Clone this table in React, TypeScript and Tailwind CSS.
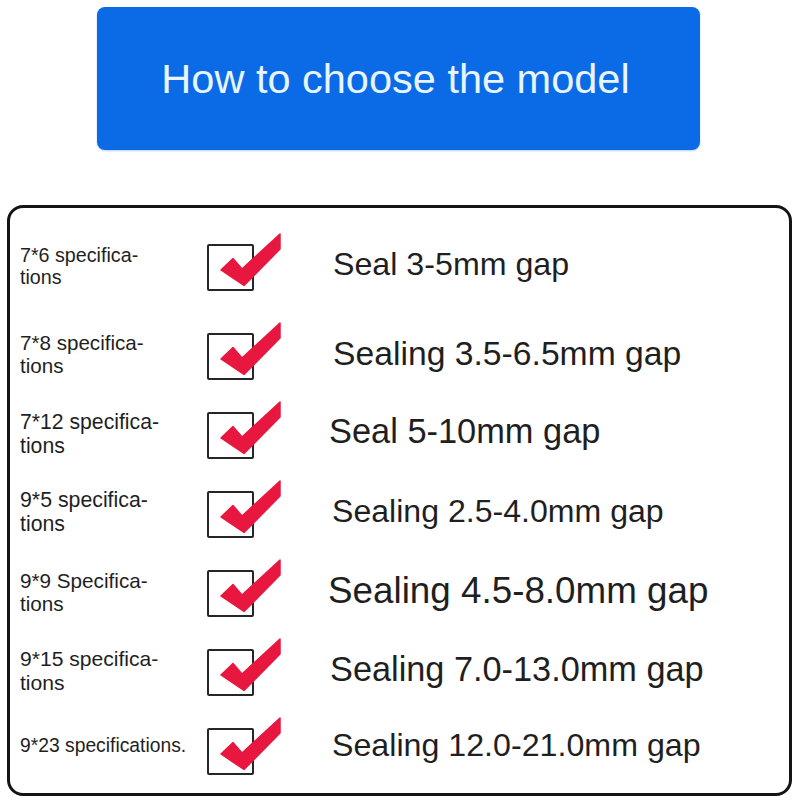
const rows = [
  {
    spec: ['7*6 specifica-', 'tions'],
    specSize: 'text-[19.7px]',
    gap: 'Seal 3-5mm gap',
    gapClass: 'ml-[79px] mb-[7px] text-[32.2px]',
    specShift: 'mb-[3px]',
    first: true,
  },
  {
    spec: ['7*8 specifica-', 'tions'],
    specSize: 'text-[20.6px]',
    gap: 'Sealing 3.5-6.5mm gap',
    gapClass: 'ml-[79px] mb-[6px] text-[33.7px]',
    specShift: 'mb-[5px]',
  },
  {
    spec: ['7*12 specifica-', 'tions'],
    specSize: 'text-[21.2px]',
    gap: 'Seal 5-10mm gap',
    gapClass: 'ml-[75px] mb-[8px] text-[34.4px]',
    specShift: 'mb-[3px]',
  },
  {
    spec: ['9*5 specifica-', 'tions'],
    specSize: 'text-[21.3px]',
    gap: 'Sealing 2.5-4.0mm gap',
    gapClass: 'ml-[78px] mb-[7px] text-[32.1px]',
    specShift: 'mb-[3px]',
  },
  {
    spec: ['9*9 Specifica-', 'tions'],
    specSize: 'text-[20.7px]',
    gap: 'Sealing 4.5-8.0mm gap',
    gapClass: 'ml-[74px] mb-[5px] text-[36.8px]',
    specShift: 'mb-[3px]',
  },
  {
    spec: ['9*15 specifica-', 'tions'],
    specSize: 'text-[21.1px]',
    gap: 'Sealing 7.0-13.0mm gap',
    gapClass: 'ml-[76px] mb-[7px] text-[34.3px]',
    specShift: 'mb-[3px]',
  },
  {
    spec: ['9*23 specifications.'],
    specSize: 'text-[19.3px]',
    gap: 'Sealing 12.0-21.0mm gap',
    gapClass: 'ml-[78px] mb-[12px] text-[32.2px]',
    specShift: 'mb-[12px]',
  },
];

function CheckBox() {
  return (
    <div className="relative w-[47px] h-[47px] shrink-0 border-2 border-[#262626] rounded-[2px] bg-white">
      <svg
        className="absolute left-[-2px] top-[-14px] overflow-visible"
        width="76"
        height="58"
        viewBox="0 -12 76 58"
      >
        <path
          d="M14 26 L26 14.5 L35 25 L73 -10 L73 5 L37 41.5 Z"
          fill="#e8173f"
          stroke="#e8173f"
          strokeWidth="1.5"
          strokeLinejoin="round"
        />
      </svg>
    </div>
  );
}

export default function App() {
  return (
    <div
      className="w-[800px] h-[800px] bg-white flex flex-col text-[#1f1f1f]"
      style={{ fontFamily: '"Liberation Sans", Arial, sans-serif' }}
    >
      {/* Banner */}
      <div className="ml-[97px] mt-[7px] w-[603px] h-[143px] rounded-[8px] bg-[#0b6ae6] flex items-center justify-center shadow-[0_1px_2px_rgba(80,140,220,0.4)]">
        <span className="text-[41.5px] text-[#e6f5ff] leading-none -ml-[6px]">How to choose the model</span>
      </div>

      {/* Spec list */}
      <div className="ml-[7px] mt-[55px] w-[785px] h-[591px] border-[3px] border-[#141414] rounded-[16px] pt-[20px] pl-[10px] flex flex-col">
        {rows.map((r) => (
          <div
            key={r.gap}
            className={`flex items-center h-[79px] ${r.first ? 'mb-[10px]' : ''}`}
          >
            <div className={`w-[187px] shrink-0 leading-[1.12] ${r.specSize} ${r.specShift}`}>
              {r.spec.map((line) => (
                <div key={line} className="whitespace-nowrap">{line}</div>
              ))}
            </div>
            <CheckBox />
            <div className={`whitespace-nowrap leading-none ${r.gapClass}`}>{r.gap}</div>
          </div>
        ))}
      </div>
    </div>
  );
}
